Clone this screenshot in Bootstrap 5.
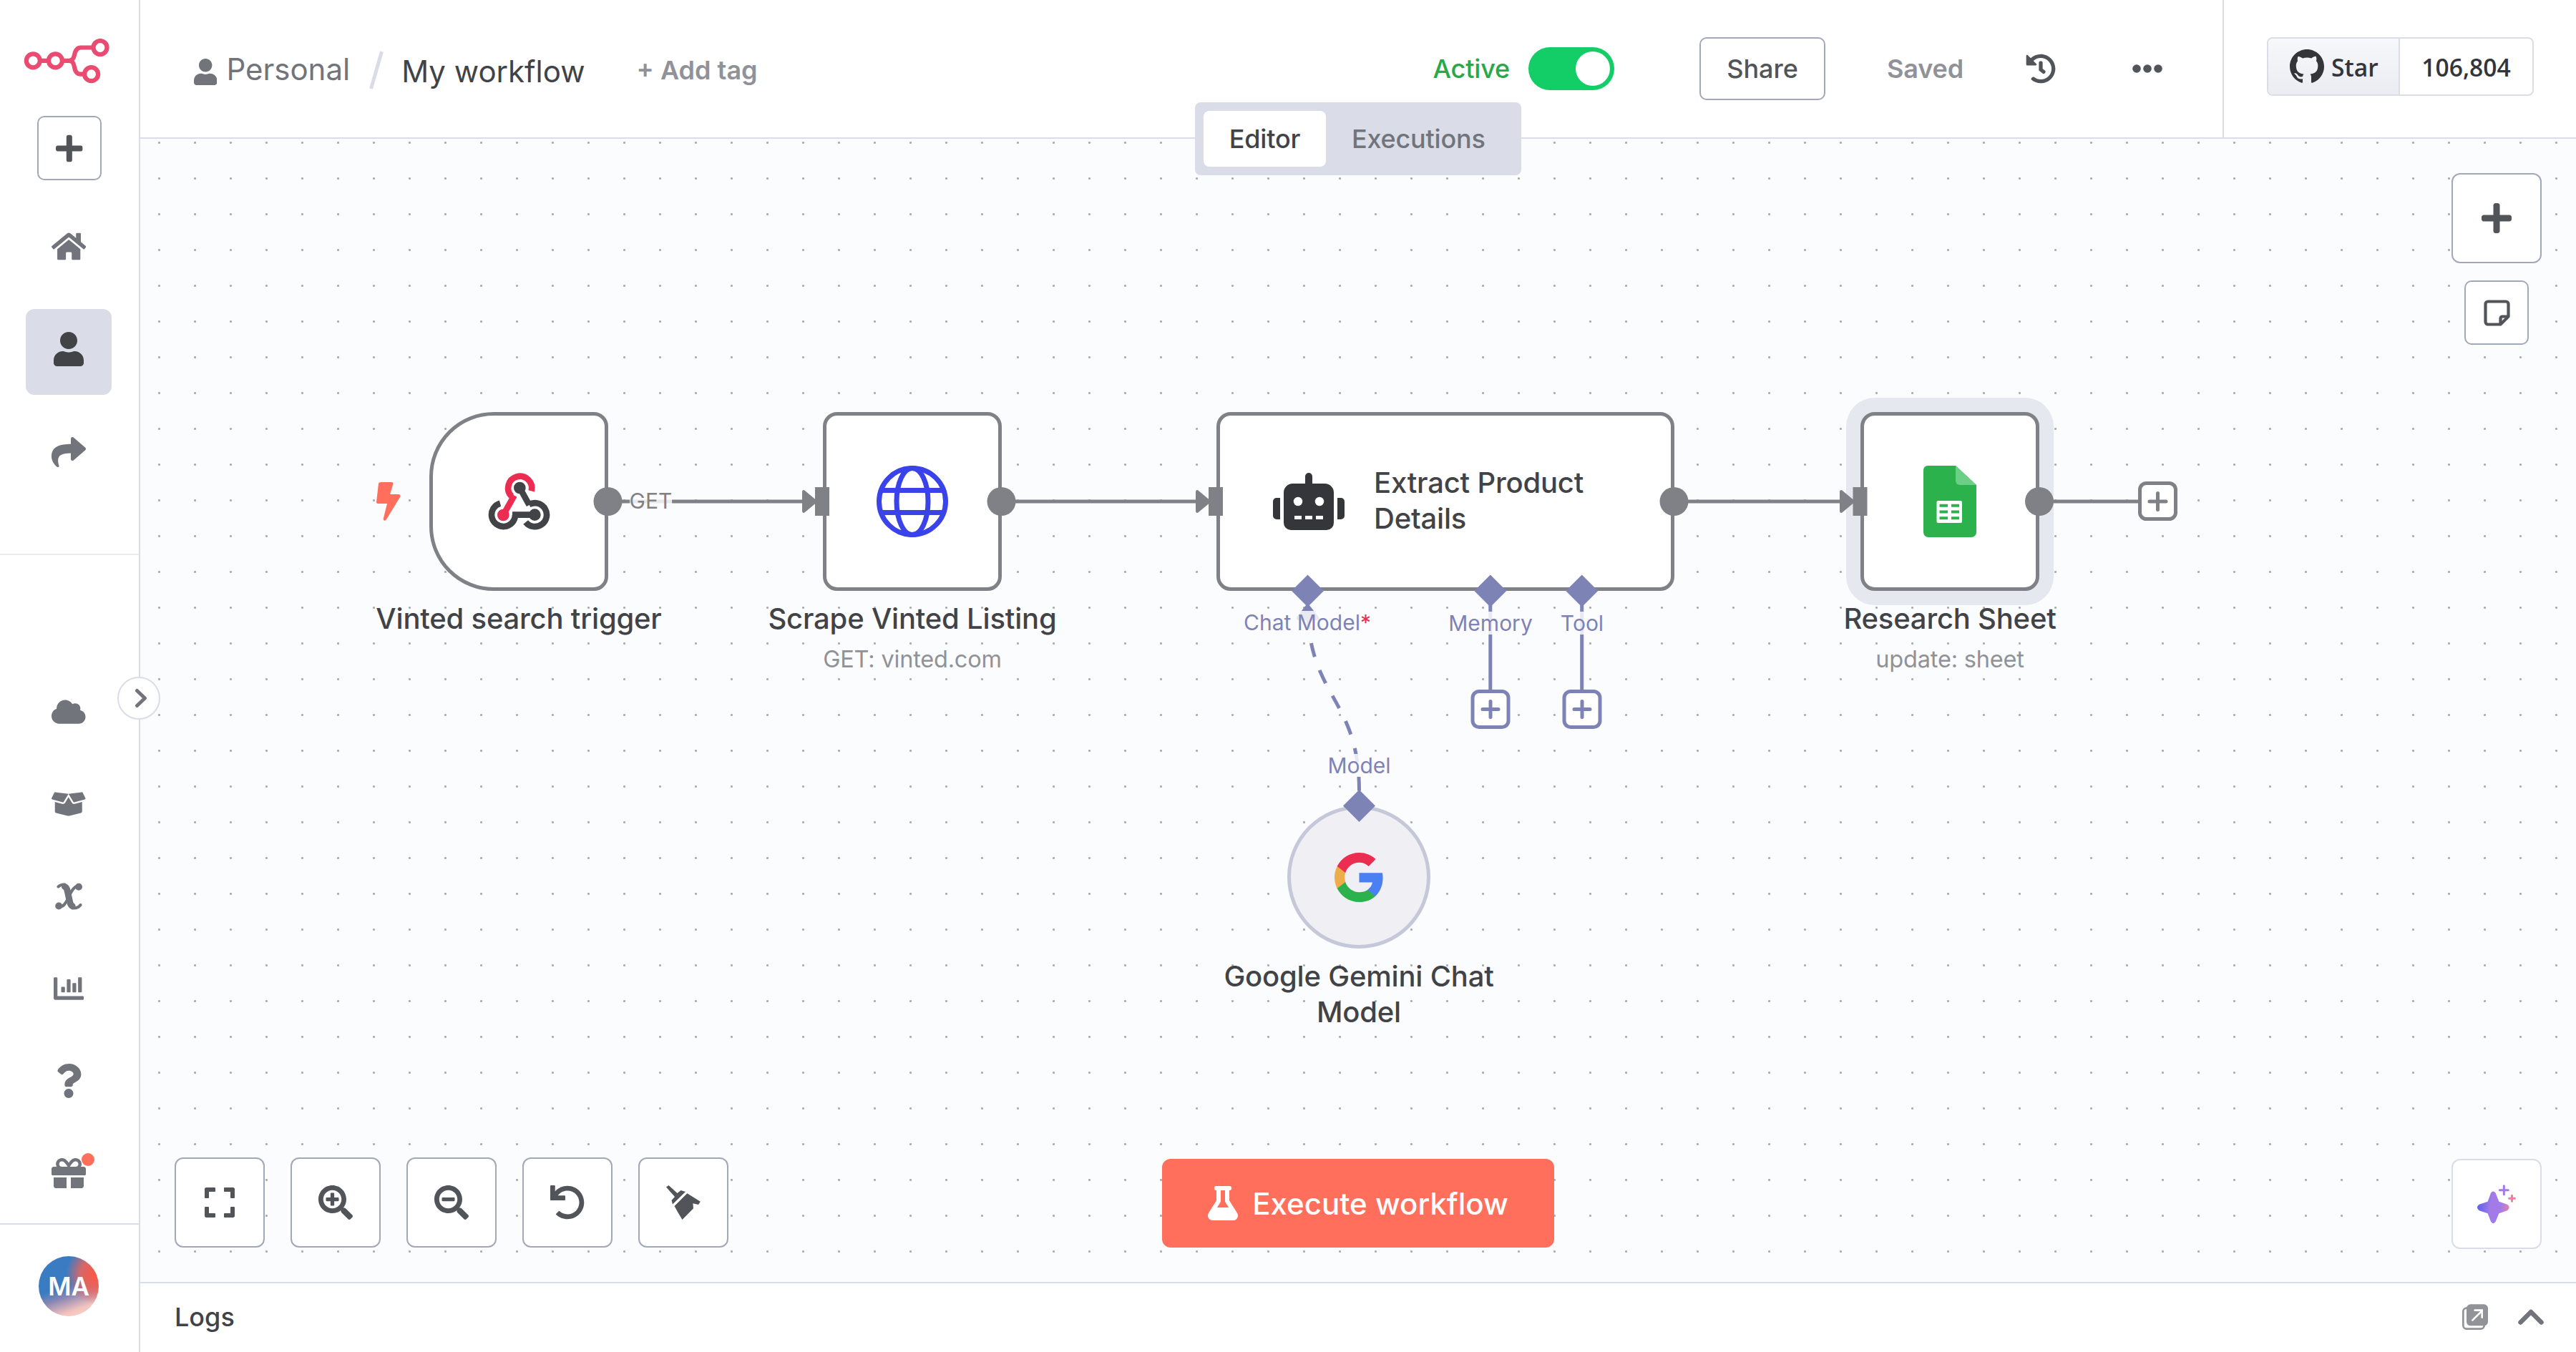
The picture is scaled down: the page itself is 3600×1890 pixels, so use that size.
<!DOCTYPE html>
<html lang="en">
<head>
<meta charset="utf-8">
<title>My workflow</title>
<link href="https://cdn.jsdelivr.net/npm/bootstrap@5.3.0/dist/css/bootstrap.min.css" rel="stylesheet">
<style>
  :root { --edge:#7f8186; --ai:#7e83b6; --line:#dadde8; --ink:#414347; --muted:#909298; --icon:#71747b; --btn-edge:#a3a8b8; --btn-ink:#515458; }
  body { width:3600px; height:1890px; font-family:Inter,"Liberation Sans",sans-serif; font-size:36px; line-height:50px; color:var(--ink); background:#fff; }
  svg { display:block; flex:none; }
  .fa { height:48px; fill:currentColor; }
  .fa-37 { height:37px; }
  .fa-38 { height:38px; }
  .fa-42 { height:42px; }

  /* sidebar */
  .side { width:196px; border-right:2px solid var(--line); color:var(--icon); padding-top:54px; }
  .logo { width:120px; height:63px; margin-left:33px; }
  .add-btn { width:90px; height:90px; margin:45px 0 0 52px; border:2px solid var(--btn-edge); border-radius:10px; color:var(--btn-ink); }
  .add-btn .fa { height:43px; }
  .side-item { width:120px; height:120px; margin-left:36px; border-radius:12px; }
  .side-item.selected { background:var(--line); color:var(--ink); margin-top:28px; margin-bottom:20px; padding-bottom:8px; }
  .side-top { height:492px; margin-top:32px; border-bottom:2px solid #e8eaf0; }
  .side-low { padding-top:154px; height:936px; border-bottom:2px solid var(--line); }
  .low-item { width:192px; height:129px; }
  .wide .fa { height:43px; }
  .dot { width:18px; height:18px; background:#ff6f5c; top:37px; left:114px; }
  .avatar { width:84px; height:84px; margin:44px 0 0 54px; color:#fff; font-size:35px; font-weight:600;
    background:radial-gradient(circle at 95% 30%,#ff5640 0,rgba(240,100,90,.85) 22%,rgba(240,120,110,0) 42%),linear-gradient(160deg,#3a7cc2 0 48%,#8a86b4 62%,#f3c3bd 82%,#ffd9d2); }
  .collapser { width:60px; height:60px; left:164px; top:946px; border:2px solid var(--line); color:var(--icon); z-index:5; }
  .collapser svg { margin-left:5px; }

  /* header */
  .topbar { height:194px; border-bottom:2px solid var(--line); }
  .crumb { padding-left:75px; font-size:42px; }
  .crumb-home { color:var(--icon); gap:13px; }
  .crumb-home .fa { margin-top:8px; }
  .crumb-home span { margin-top:2px; }
  .slash { margin:4px 0 0 27px; }
  .wf-name { margin:7px 0 0 25px; }
  .addtag { font-size:36px; color:var(--muted); font-weight:600; margin:3px 0 0 72px; }
  .actions { margin-right:84px; letter-spacing:-.15px; }
  .is-active { color:#29a84a; font-weight:500; }
  .switch { width:120px; height:60px; border-radius:30px; background:#13ce66; padding:6px; margin-left:26px; }
  .knob { width:48px; height:48px; }
  .share-btn { width:176px; height:88px; border:2px solid var(--btn-edge); border-radius:10px; color:var(--btn-ink); font-size:36px; font-weight:500; margin-left:119px; }
  .saved { color:var(--muted); font-weight:600; margin-left:86px; }
  .history { color:var(--btn-ink); margin-left:87px; }
  .more { margin-left:107px; }
  .github-zone { width:494px; border-left:2px solid var(--line); padding-left:60px; }
  .star { width:373px; height:82px; margin-top:-6px; border:2px solid #dadde5; border-radius:8px; font-family:"Open Sans","Noto Sans",sans-serif; font-weight:600; font-size:33.6px; color:#333539; }
  .star-l { width:184px; border-right:2px solid #dadde5; background:linear-gradient(#f6f8fa,#ebecf2); padding-left:30px; gap:10px; }
  .star-l span, .star-n { padding-top:2px; }
  .tabs { left:50%; top:143px; transform:translateX(-50%); width:456px; height:102px; border-radius:8px; background:var(--line); padding:12px; z-index:4; font-weight:500; letter-spacing:-.2px; }
  .tab-on { width:171px; height:78px; border-radius:8px; color:var(--ink); }
  .tab-off { padding-left:36px; color:var(--icon); }

  /* canvas */
  .canvas { background:#fbfcfe radial-gradient(circle at 1.5px 1.5px,#aaacb0 0 1.2px,rgba(170,172,176,0) 1.9px) 25px 4px/50px 50px; }
  .edges { left:0; top:0; width:3404px; height:1598px; }
  .node { width:250px; height:250px; border:5px solid var(--edge); border-radius:20px; background:#fff; top:382px; }
  .n-trigger { left:404px; border-radius:90px 20px 20px 90px; }
  .n-scrape { left:954px; }
  .n-extract { left:1504px; width:640px; padding-left:74px; gap:41px; font-size:40px; font-weight:500; letter-spacing:-.2px; }
  .n-extract div { margin-top:-2px; }
  .n-sheet { left:2404px; box-shadow:0 0 0 20px #e5e8ef; }
  .n-gemini { left:1603px; top:932px; width:200px; height:200px; border-color:#c4c8d8; background:#efeff4; border-radius:50%; }
  .caption { left:50%; transform:translateX(-50%); top:calc(100% + 19px); width:500px; text-align:center; font-size:40px; line-height:50px; font-weight:500; letter-spacing:-.2px; }
  .subtitle { font-size:32.5px; line-height:40px; margin-top:12px; font-weight:400; color:var(--muted); }
  .n-gemini .caption { width:400px; }
  .port { font-size:30px; line-height:32px; background:rgba(251,252,254,.85); color:var(--ai); transform:translateX(-50%); white-space:nowrap; }
  .p-get { left:713.5px; top:490px; color:var(--edge); }
  .p-chat { left:1631px; top:660px; }
  .p-chat span { color:#ea2d50; }
  .p-memory { left:1887px; top:661px; }
  .p-tool { left:2015px; top:661px; }
  .p-model { left:1703.5px; top:860px; }
  .tool-btn { width:126px; height:126px; border:2px solid var(--btn-edge); border-radius:12px; background:#fff; color:var(--btn-ink); }
  .tool-sm { width:90px; height:90px; border-radius:10px; }
  .tools { left:48px; bottom:48px; gap:36px; }
  .right-tools { right:48px; top:48px; gap:24px; }
  .exec { left:50%; transform:translateX(-50%); bottom:48px; width:548px; height:124px; border-radius:12px; background:#ff6f5c; color:#fff; font-size:42px; font-weight:500; gap:20px; }
  .ai-btn { right:48px; bottom:46px; border-color:var(--line); }
  .logs { height:98px; border-top:2px solid var(--line); padding:0 45px 2px 48px; font-weight:500; }
  .logs-tools { gap:42px; }
</style>
</head>
<body class="d-flex overflow-hidden position-relative">
<svg width="0" height="0" class="position-absolute">
  <symbol id="i-plus" viewBox="0 0 448 512"><path d="M416 208H272V64c0-17.67-14.33-32-32-32h-32c-17.67 0-32 14.33-32 32v144H32c-17.67 0-32 14.33-32 32v32c0 17.67 14.33 32 32 32h144v144c0 17.67 14.33 32 32 32h32c17.67 0 32-14.33 32-32V304h144c17.67 0 32-14.33 32-32v-32c0-17.67-14.33-32-32-32z"/></symbol>
  <symbol id="i-user" viewBox="0 0 448 512"><path d="M224 256c70.7 0 128-57.3 128-128S294.7 0 224 0 96 57.3 96 128s57.3 128 128 128zm89.6 32h-16.7c-22.2 10.2-46.9 16-72.9 16s-50.6-5.8-72.9-16h-16.7C60.2 288 0 348.2 0 422.4V464c0 26.5 21.5 48 48 48h352c26.5 0 48-21.5 48-48v-41.6c0-74.2-60.2-134.4-134.4-134.4z"/></symbol>
</svg>

<aside class="side d-flex flex-column flex-shrink-0">
  <svg class="logo" viewBox="33 54 120 63" fill="none" stroke="#ea4b71" stroke-width="6.2"><circle cx="46.3" cy="84.8" r="9.5"/><circle cx="77.4" cy="84.8" r="9.5"/><circle cx="140" cy="66.5" r="9.5"/><circle cx="127.6" cy="103.7" r="9.5"/><path d="M56 84.8h12M87 84.8h9c5 0 7-3 8-8s3-10.300 9-10.300h18M96 84.800c5 0 7 3 8 9s3 9.900 9 9.900h5"/></svg>
  <button class="add-btn btn p-0 d-flex align-items-center justify-content-center"><svg class="fa" viewBox="0 0 448 512"><use href="#i-plus"/></svg></button>
  <nav class="side-top">
    <div class="side-item wide d-flex align-items-center justify-content-center"><svg class="fa" viewBox="0 0 576 512"><path d="M280.37 148.26L96 300.11V464a16 16 0 0 0 16 16l112.06-.29a16 16 0 0 0 15.92-16V368a16 16 0 0 1 16-16h64a16 16 0 0 1 16 16v95.64a16 16 0 0 0 16 16.05L464 480a16 16 0 0 0 16-16V300L295.67 148.26a12.19 12.19 0 0 0-15.3 0zM571.6 251.47L488 182.56V44.05a12 12 0 0 0-12-12h-56a12 12 0 0 0-12 12v72.61L318.47 43a48 48 0 0 0-61 0L4.34 251.47a12 12 0 0 0-1.6 16.9l25.5 31A12 12 0 0 0 45.15 301l235.22-193.74a12.19 12.19 0 0 1 15.3 0L530.9 301a12 12 0 0 0 16.9-1.6l25.5-31a12 12 0 0 0-1.7-16.93z"/></svg></div>
    <div class="side-item selected d-flex align-items-center justify-content-center"><svg class="fa" viewBox="0 0 448 512"><use href="#i-user"/></svg></div>
    <div class="side-item d-flex align-items-center justify-content-center"><svg class="fa" viewBox="0 0 512 512"><path d="M503.691 189.836L327.687 37.851C312.281 24.546 288 35.347 288 56.015v80.053C127.371 137.907 0 170.1 0 322.326c0 61.441 39.581 122.309 83.333 154.132 13.653 9.931 33.111-2.533 28.077-18.631C66.066 312.814 132.917 274.316 288 272.085V360c0 20.7 24.3 31.453 39.687 18.164l176.004-152c11.071-9.562 11.086-26.753 0-36.328z"/></svg></div>
  </nav>
  <nav class="side-low">
    <div class="low-item d-flex align-items-center justify-content-center"><svg class="fa fa-38" viewBox="0 0 640 512"><path d="M537.6 226.6c4.100-10.700 6.400-22.400 6.400-34.600 0-53-43-96-96-96-19.700 0-38.100 6-53.300 16.200C367 64.200 315.300 32 256 32c-88.400 0-160 71.600-160 160 0 2.700.1 5.400.2 8.100C40.200 219.800 0 273.200 0 336c0 79.500 64.500 144 144 144h368c70.700 0 128-57.300 128-128 0-61.900-44-113.600-102.400-125.400z"/></svg></div>
    <div class="low-item d-flex align-items-center justify-content-center"><svg class="fa fa-38" viewBox="0 0 640 512"><path d="M425.7 256c-16.9 0-32.8-9-41.400-23.400L320 126l-64.200 106.600c-8.700 14.500-24.600 23.500-41.500 23.500-4.500 0-9-.6-13.300-1.900L64 215v178c0 14.700 10 27.500 24.200 31l216.200 54.100c10.200 2.500 20.900 2.500 31 0L551.8 424c14.200-3.600 24.200-16.400 24.200-31V215l-137 39.100c-4.300 1.300-8.800 1.900-13.300 1.900zm212.600-112.2L586.8 41c-3.100-6.200-9.800-9.800-16.700-8.900L320 64l91.700 152.100c3.800 6.300 11.400 9.300 18.500 7.300l197.900-56.500c9.900-2.900 14.700-13.900 10.200-23.100zM53.200 41L1.700 143.800c-4.600 9.200.3 20.200 10.100 23l197.900 56.500c7.100 2 14.700-1 18.500-7.300L320 64 69.800 32.100c-6.900-.8-13.500 2.700-16.600 8.900z"/></svg></div>
    <div class="low-item d-flex align-items-center justify-content-center"><svg width="40" height="40" viewBox="0 0 40 40" fill="none" stroke="currentColor" stroke-linecap="round"><path stroke-width="9" d="M14.500 6.500c2 1 3 3 3.500 5l3.500 16c.7 3 1.500 5 3.500 6"/><path stroke-width="4" d="M5.500 6.500c2.500-2.500 5-3.200 9-3M25 36.500c5 .5 9-1 11.500-4.500M8 34.500c5 0 8-5 12-13.500s7-14.500 13-15.500"/><circle cx="34" cy="6.800" r="3.500" fill="currentColor" stroke-width="3"/><circle cx="6.200" cy="33.500" r="3.500" fill="currentColor" stroke-width="3"/></svg></div>
    <div class="low-item d-flex align-items-center justify-content-center"><svg class="fa fa-42" viewBox="0 0 512 512"><path d="M332.8 320h38.400c6.400 0 12.800-6.400 12.800-12.800V172.800c0-6.400-6.400-12.800-12.800-12.800h-38.400c-6.400 0-12.800 6.400-12.800 12.800v134.400c0 6.400 6.400 12.800 12.800 12.800zm96 0h38.400c6.400 0 12.800-6.400 12.800-12.800V76.800c0-6.400-6.400-12.800-12.800-12.800h-38.400c-6.400 0-12.800 6.400-12.800 12.800v230.400c0 6.400 6.400 12.800 12.800 12.800zm-288 0h38.400c6.400 0 12.800-6.400 12.800-12.800v-70.400c0-6.400-6.400-12.800-12.800-12.800h-38.400c-6.400 0-12.800 6.400-12.800 12.800v70.400c0 6.400 6.400 12.800 12.800 12.800zm96 0h38.400c6.400 0 12.800-6.400 12.800-12.800V108.800c0-6.400-6.400-12.800-12.800-12.800h-38.400c-6.400 0-12.800 6.400-12.800 12.800v198.400c0 6.400 6.400 12.800 12.800 12.800zM496 384H64V80c0-8.840-7.160-16-16-16H16C7.160 64 0 71.160 0 80v336c0 17.670 14.330 32 32 32h464c8.840 0 16-7.160 16-16v-32c0-8.840-7.160-16-16-16z"/></svg></div>
    <div class="low-item d-flex align-items-center justify-content-center"><svg class="fa" viewBox="0 0 384 512"><path d="M202.021 0C122.202 0 70.503 32.703 29.914 91.026c-7.363 10.580-5.093 25.086 5.178 32.874l43.138 32.709c10.373 7.865 25.132 6.026 33.253-4.148 25.049-31.381 43.630-49.449 82.757-49.449 30.764 0 68.816 19.799 68.816 49.631 0 22.552-18.617 34.134-48.993 51.164-35.423 19.860-82.299 44.576-82.299 106.405V320c0 13.255 10.745 24 24 24h72.471c13.255 0 24-10.745 24-24v-5.773c0-42.860 125.268-44.645 125.268-160.627C377.504 66.256 286.902 0 202.021 0zM192 373.459c-38.196 0-69.271 31.075-69.271 69.271 0 38.195 31.075 69.270 69.271 69.270s69.271-31.075 69.271-69.271-31.075-69.270-69.271-69.270z"/></svg></div>
    <div class="low-item d-flex align-items-center justify-content-center position-relative"><svg class="fa" viewBox="0 0 512 512"><path d="M32 448c0 17.700 14.300 32 32 32h160V320H32v128zm256 32h160c17.700 0 32-14.300 32-32V320H288v160zm192-320h-42.100c6.200-12.100 10.100-25.500 10.100-40 0-48.500-39.500-88-88-88-41.600 0-68.500 21.300-103 68.300-34.500-47-61.400-68.300-103-68.300-48.500 0-88 39.500-88 88 0 14.500 3.800 27.900 10.100 40H32c-17.700 0-32 14.300-32 32v80c0 8.800 7.200 16 16 16h480c8.800 0 16-7.200 16-16v-80c0-17.700-14.300-32-32-32zm-326.100 0c-22.100 0-40-17.900-40-40s17.900-40 40-40c19.900 0 34.600 3.300 86.100 80h-86.100zm206.100 0h-86.100c51.400-76.500 65.700-80 86.100-80 22.100 0 40 17.900 40 40s-17.900 40-40 40z"/></svg><span class="dot rounded-circle position-absolute"></span></div>
  </nav>
  <div class="avatar rounded-circle d-flex align-items-center justify-content-center">MA</div>
</aside>
<button class="collapser btn p-0 bg-white rounded-circle position-absolute d-flex align-items-center justify-content-center"><svg width="18" height="28" viewBox="0 0 18 28" fill="none" stroke="currentColor" stroke-width="5" stroke-linecap="round" stroke-linejoin="round"><path d="M3.500 3.500l11 10.500-11 10.500"/></svg></button>

<div class="d-flex flex-column flex-grow-1 position-relative">
  <header class="topbar d-flex flex-shrink-0">
    <div class="crumb d-flex align-items-center flex-grow-1">
      <div class="crumb-home d-flex align-items-center"><svg class="fa fa-37" viewBox="0 0 448 512"><use href="#i-user"/></svg><span>Personal</span></div>
      <svg class="slash" width="20" height="54" viewBox="0 0 20 54"><path d="M17.500 1L2.500 53" stroke="#dadde8" stroke-width="5"/></svg>
      <span class="wf-name">My workflow</span>
      <span class="addtag">+ Add tag</span>
    </div>
    <div class="actions d-flex align-items-center">
      <span class="is-active">Active</span>
      <div class="switch d-flex justify-content-end"><span class="knob bg-white rounded-circle"></span></div>
      <button class="share-btn btn p-0">Share</button>
      <span class="saved">Saved</span>
      <svg class="fa fa-42 history" viewBox="0 0 512 512"><path d="M504 255.531c.253 136.640-111.180 248.372-247.820 248.468-59.015.042-113.223-20.530-155.822-54.911-11.077-8.940-11.905-25.541-1.839-35.607l11.267-11.267c8.609-8.609 22.353-9.551 31.891-1.984C173.062 425.135 212.781 440 256 440c101.705 0 184-82.311 184-184 0-101.705-82.311-184-184-184-48.814 0-93.149 18.969-126.068 49.932l50.754 50.754c10.080 10.080 2.941 27.314-11.313 27.314H24c-8.837 0-16-7.163-16-16V38.627c0-14.254 17.234-21.393 27.314-11.314l49.372 49.372C129.209 34.136 189.552 8 256 8c136.810 0 247.747 110.780 248 247.531zm-180.912 78.784l9.823-12.630c8.138-10.463 6.253-25.542-4.210-33.679L288 256.349V152c0-13.255-10.745-24-24-24h-16c-13.255 0-24 10.745-24 24v135.651l65.409 50.874c10.463 8.137 25.541 6.253 33.679-4.210z"/></svg>
      <svg class="more" width="42" height="12" viewBox="0 0 42 12" fill="#515458"><circle cx="6" cy="6" r="5.800"/><circle cx="21" cy="6" r="5.800"/><circle cx="36" cy="6" r="5.800"/></svg>
    </div>
    <div class="github-zone d-flex align-items-center">
      <div class="star d-flex overflow-hidden">
        <div class="star-l d-flex align-items-center"><svg width="48" height="48" viewBox="0 0 16 16" fill="#333539"><path d="M8 0C3.580 0 0 3.580 0 8c0 3.540 2.290 6.530 5.470 7.590.4.07.55-.17.55-.38 0-.19-.01-.82-.01-1.490-2.010.37-2.530-.49-2.690-.94-.09-.23-.48-.94-.82-1.130-.28-.15-.68-.52-.01-.53.63-.01 1.080.58 1.230.82.72 1.210 1.870.87 2.330.66.07-.52.28-.87.51-1.070-1.780-.2-3.640-.89-3.640-3.950 0-.87.31-1.590.82-2.150-.08-.2-.36-1.020.08-2.120 0 0 .67-.21 2.200.82.64-.18 1.320-.27 2-.27.68 0 1.360.09 2 .27 1.530-1.040 2.200-.82 2.200-.82.44 1.100.16 1.920.08 2.120.51.56.82 1.270.82 2.150 0 3.070-1.870 3.750-3.650 3.950.29.25.54.73.54 1.480 0 1.070-.01 1.930-.01 2.200 0 .21.15.46.55.38A8.013 8.013 0 0016 8c0-4.420-3.580-8-8-8z"/></svg><span>Star</span></div>
        <div class="star-n flex-grow-1 d-flex align-items-center justify-content-center">106,804</div>
      </div>
    </div>
  </header>
  <div class="tabs position-absolute d-flex align-items-center"><span class="tab-on bg-white d-flex align-items-center justify-content-center">Editor</span><span class="tab-off">Executions</span></div>

  <main class="canvas flex-grow-1 position-relative overflow-hidden">
    <div class="node n-trigger position-absolute d-flex align-items-center justify-content-center">
      <svg width="100" height="100" viewBox="495 33 300 300" fill="none" stroke="#414347" stroke-width="26"><path d="M630 239A49.500 49.500 0 1 1 567 191M618 239h94M649 126l40 72M688 196A49.500 49.500 0 1 1 674 270"/><g fill="#414347" stroke="none"><circle cx="649" cy="126" r="25"/><circle cx="712" cy="239" r="25"/></g><path stroke="#ea2d50" d="M698 139A49.500 49.500 0 1 0 615 162M626 158L580 240"/><circle cx="580" cy="240" r="25" fill="#ea2d50" stroke="none"/></svg>
      <div class="caption position-absolute">Vinted search trigger</div>
    </div>
    <div class="node n-scrape position-absolute d-flex align-items-center justify-content-center">
      <svg width="100" height="100" viewBox="0 0 100 100" fill="none" stroke="#3a42e9" stroke-width="7"><circle cx="50" cy="50" r="46.500"/><ellipse cx="50" cy="50" rx="22" ry="46.500"/><path d="M7 34.500h86M7 65.500h86"/></svg>
      <div class="caption position-absolute">Scrape Vinted Listing<div class="subtitle">GET: vinted.com</div></div>
    </div>
    <div class="node n-extract position-absolute d-flex align-items-center">
      <svg width="100" height="80" viewBox="0 0 640 512" fill="#353639"><path d="M32,224H64V416H32A31.966,31.966,0,0,1,0,384V256A31.966,31.966,0,0,1,32,224Zm512-48V448a64.063,64.063,0,0,1-64,64H160a64.063,64.063,0,0,1-64-64V176a79.974,79.974,0,0,1,80-80H288V32a32,32,0,0,1,64,0V96H464A79.974,79.974,0,0,1,544,176ZM264,256a40,40,0,1,0-40,40A39.997,39.997,0,0,0,264,256Zm-8,128H192v32h64Zm96,0H288v32h64ZM456,256a40,40,0,1,0-40,40A39.997,39.997,0,0,0,456,256Zm-8,128H384v32h64ZM640,256V384a31.966,31.966,0,0,1-32,32H576V224h32A31.966,31.966,0,0,1,640,256Z"/></svg>
      <div>Extract Product<br>Details</div>
    </div>
    <div class="node n-sheet position-absolute d-flex align-items-center justify-content-center">
      <svg width="74" height="100" viewBox="0 0 74 100"><path d="M6 0H45L74 27V93a7 7 0 0 1-7 7H7a7 7 0 0 1-7-7V6a6 6 0 0 1 6-6z" fill="#2bb24c"/><path d="M45 0L74 27H51a6 6 0 0 1-6-6z" fill="#6bd085"/><rect x="18.500" y="49" width="35.500" height="31" rx="2" fill="#fff"/><path d="M22.500 55.800h11.500M39 55.800h11M22.500 64.500h11.500M39 64.500h11M22.500 73.200h11.500M39 73.200h11" stroke="#2bb24c" stroke-width="4"/></svg>
      <div class="caption position-absolute">Research Sheet<div class="subtitle">update: sheet</div></div>
    </div>
    <div class="node n-gemini position-absolute d-flex align-items-center justify-content-center">
      <svg width="68" height="69" viewBox="1 1 21.700 22" preserveAspectRatio="none"><path fill="#4a80f2" d="M22.560 12.250c0-.78-.07-1.530-.2-2.250H12v4.260h5.920c-.26 1.370-1.040 2.530-2.210 3.310v2.770h3.570c2.080-1.920 3.280-4.740 3.280-8.090z"/><path fill="#2bb24c" d="M12 23c2.970 0 5.460-.98 7.280-2.660l-3.570-2.770c-.98.66-2.230 1.060-3.710 1.060-2.860 0-5.290-1.930-6.160-4.530H2.180v2.840C3.990 20.530 7.700 23 12 23z"/><path fill="#eead4b" d="M5.840 14.090c-.22-.66-.35-1.360-.35-2.090s.13-1.430.35-2.090V7.070H2.180C1.430 8.550 1 10.220 1 12s.43 3.450 1.180 4.930l2.850-2.220.81-.62z"/><path fill="#ea2d50" d="M12 5.380c1.620 0 3.060.56 4.210 1.640l3.150-3.150C17.450 2.090 14.970 1 12 1 7.700 1 3.990 3.470 2.180 7.070l3.660 2.840c.87-2.600 3.300-4.530 6.160-4.530z"/></svg>
      <div class="caption position-absolute">Google Gemini Chat Model</div>
    </div>

    <svg class="edges position-absolute" viewBox="196 194 3404 1598" fill="none">
      <path d="M533 674h14a2.500 2.500 0 0 1 2.300 3L545 691h12a2.500 2.500 0 0 1 2 4l-19 31c-2 3-5 2-4-2l5-20h-13a2 2 0 0 1-2-2l3-26q.5-2 4-2z" fill="#ff6f5c"/>
      <g stroke="#7f8186" stroke-width="5"><path d="M850 701h275M1400 701h275M2340 701h235M2850 701h138"/></g>
      <g fill="#7f8186">
        <circle cx="849.500" cy="701" r="20"/><circle cx="1399.500" cy="701" r="20"/><circle cx="2339.500" cy="701" r="20"/><circle cx="2850" cy="701" r="20"/>
        <path d="M1139 681h20v40h-20zM1689 681h20v40h-20zM2589.500 681h20v40h-20z"/>
        <path id="head" d="M1121 688c0-3 2-4 4-2l18 15-18 15c-2 2-4 1-4-2z"/><use href="#head" x="550"/><use href="#head" x="1450"/>
      </g>
      <g stroke="#7e83b6" stroke-width="5">
        <path d="M1899.500 1105.500C1899.500 975 1827.500 975 1827.500 846" stroke-dasharray="20 20"/>
        <path d="M2082.800 826v138M2210.700 826v138"/>
        <g fill="#fff"><rect x="2058" y="966.500" width="50" height="50" rx="9"/><rect x="2186" y="966.500" width="50" height="50" rx="9"/></g>
        <path d="M2072 991.500h22M2083 980.500v22M2200 991.500h22M2211 980.500v22" stroke-linecap="round"/>
      </g>
      <g fill="#7e83b6"><path d="M1827.500 803.500l22.500 22.500-22.500 22.500-22.500-22.500zM2082.800 803.500l22.500 22.500-22.500 22.500-22.500-22.500zM2210.700 803.500l22.500 22.500-22.500 22.500-22.500-22.500zM1899.500 1104l22.500 22.500-22.500 22.500-22.500-22.500zM1827.500 843l15 19c2 3 0 5-3 5h-24c-3 0-5-2-3-5z"/></g>
      <rect x="2990.500" y="675.500" width="50" height="50" rx="9" fill="#fff" stroke="#7f8186" stroke-width="5"/><path d="M3004 701h23M3015.500 689.500v23" stroke="#7f8186" stroke-width="5" stroke-linecap="round"/>
    </svg>
    <span class="port p-get position-absolute">GET</span>
    <span class="port p-chat position-absolute">Chat Model<span>*</span></span>
    <span class="port p-memory position-absolute">Memory</span>
    <span class="port p-tool position-absolute">Tool</span>
    <span class="port p-model position-absolute">Model</span>

    <div class="right-tools position-absolute d-flex flex-column align-items-center">
      <button class="tool-btn btn p-0 d-flex align-items-center justify-content-center"><svg class="fa" viewBox="0 0 448 512"><use href="#i-plus"/></svg></button>
      <button class="tool-btn tool-sm btn p-0 d-flex align-items-center justify-content-center"><svg width="37" height="37" viewBox="0 0 37 37" fill="none" stroke="currentColor" stroke-width="4.200" stroke-linejoin="round"><path d="M6 2.500h25a3.500 3.500 0 0 1 3.500 3.500v17.500l-11 11H6A3.500 3.500 0 0 1 2.500 31V6A3.500 3.500 0 0 1 6 2.500z"/><path d="M34 23.500h-8a2.500 2.500 0 0 0-2.500 2.500v8"/></svg></button>
    </div>
    <div class="tools position-absolute d-flex">
      <button class="tool-btn btn p-0 d-flex align-items-center justify-content-center"><svg class="fa" viewBox="0 0 448 512"><path d="M0 180V56c0-13.300 10.700-24 24-24h124c6.600 0 12 5.400 12 12v40c0 6.600-5.400 12-12 12H64v84c0 6.600-5.400 12-12 12H12c-6.600 0-12-5.400-12-12zM288 44v40c0 6.600 5.400 12 12 12h84v84c0 6.600 5.400 12 12 12h40c6.600 0 12-5.400 12-12V56c0-13.300-10.700-24-24-24H300c-6.600 0-12 5.400-12 12zm148 276h-40c-6.600 0-12 5.400-12 12v84h-84c-6.600 0-12 5.400-12 12v40c0 6.600 5.400 12 12 12h124c13.300 0 24-10.700 24-24V332c0-6.600-5.400-12-12-12zM160 468v-40c0-6.600-5.400-12-12-12H64v-84c0-6.600-5.400-12-12-12H12c-6.600 0-12 5.400-12 12v124c0 13.300 10.700 24 24 24h124c6.600 0 12-5.400 12-12z"/></svg></button>
      <button class="tool-btn btn p-0 d-flex align-items-center justify-content-center"><svg class="fa" viewBox="0 0 512 512"><path d="M304 192v32c0 6.600-5.400 12-12 12h-56v56c0 6.600-5.400 12-12 12h-32c-6.600 0-12-5.400-12-12v-56h-56c-6.600 0-12-5.400-12-12v-32c0-6.600 5.400-12 12-12h56v-56c0-6.600 5.400-12 12-12h32c6.600 0 12 5.400 12 12v56h56c6.600 0 12 5.400 12 12zm201 284.700L476.700 505c-9.400 9.400-24.600 9.400-33.900 0L343 405.300c-4.500-4.500-7-10.600-7-17V372c-35.300 27.600-79.700 44-128 44C93.100 416 0 322.900 0 208S93.100 0 208 0s208 93.100 208 208c0 48.300-16.400 92.700-44 128h16.300c6.400 0 12.500 2.500 17 7l99.700 99.700c9.300 9.400 9.300 24.600 0 34zM344 208c0-75.200-60.800-136-136-136S72 132.800 72 208s60.800 136 136 136 136-60.800 136-136z"/></svg></button>
      <button class="tool-btn btn p-0 d-flex align-items-center justify-content-center"><svg class="fa" viewBox="0 0 512 512"><path d="M304 192v32c0 6.600-5.400 12-12 12H124c-6.600 0-12-5.400-12-12v-32c0-6.600 5.400-12 12-12h168c6.600 0 12 5.400 12 12zm201 284.700L476.700 505c-9.400 9.400-24.600 9.400-33.900 0L343 405.300c-4.500-4.500-7-10.600-7-17V372c-35.300 27.600-79.700 44-128 44C93.100 416 0 322.900 0 208S93.100 0 208 0s208 93.100 208 208c0 48.300-16.400 92.700-44 128h16.300c6.400 0 12.500 2.500 17 7l99.700 99.700c9.300 9.400 9.300 24.600 0 34zM344 208c0-75.200-60.800-136-136-136S72 132.800 72 208s60.800 136 136 136 136-60.800 136-136z"/></svg></button>
      <button class="tool-btn btn p-0 d-flex align-items-center justify-content-center"><svg class="fa" viewBox="0 0 512 512"><path d="M212.333 224.333H12c-6.627 0-12-5.373-12-12V12C0 5.373 5.373 0 12 0h48c6.627 0 12 5.373 12 12v78.112C117.773 39.279 184.260 7.470 258.175 8.007c136.906.994 246.448 111.623 246.157 248.532C504.041 393.258 393.120 504 256.333 504c-64.089 0-122.496-24.313-166.510-64.215-5.099-4.622-5.334-12.554-.467-17.420l33.967-33.967c4.474-4.474 11.662-4.717 16.401-.525C170.760 415.336 211.580 432 256.333 432c97.268 0 176-78.716 176-176 0-97.267-78.716-176-176-176-58.496 0-110.280 28.476-142.274 72.333h98.274c6.627 0 12 5.373 12 12v48c0 6.627-5.373 12-12 12z"/></svg></button>
      <button class="tool-btn btn p-0 d-flex align-items-center justify-content-center"><svg class="fa" viewBox="0 0 48 48"><path d="M0 2.500L3.500 0l12 11 5-4 6.500 2L9 26.500 7.500 21l4.500-5zM29.400 11.300l18.400 11.400L45 27l-7.600-1.700.6 7L22.500 48l-6-10-5-9z"/></svg></button>
    </div>
    <button class="exec btn p-0 position-absolute d-flex align-items-center justify-content-center"><svg class="fa" viewBox="0 0 448 512"><path d="M437.200 403.500L320 215V64h8c13.300 0 24-10.700 24-24V24c0-13.300-10.700-24-24-24H120c-13.300 0-24 10.700-24 24v16c0 13.300 10.700 24 24 24h8v151L10.800 403.500C-18.500 450.600 15.300 512 70.900 512h306.200c55.700 0 89.400-61.500 60.100-108.500zM137.900 320l48.200-77.600c3.700-5.200 5.800-11.600 5.800-18.400V64h64v160c0 6.900 2.200 13.200 5.800 18.400l48.200 77.600h-172z"/></svg>Execute workflow</button>
    <button class="tool-btn ai-btn btn p-0 position-absolute d-flex align-items-center justify-content-center"><svg width="54" height="55" viewBox="246 197 162 164"><defs><linearGradient id="spark" gradientUnits="userSpaceOnUse" x1="246" y1="280" x2="408" y2="300"><stop offset="0" stop-color="#5b60e8"/><stop offset=".35" stop-color="#a37be8"/><stop offset=".6" stop-color="#a37be8"/><stop offset=".9" stop-color="#f6809c"/></linearGradient></defs><path fill="url(#spark)" d="M303 232Q313 218 323 232L337 268 372 280Q388 292 372 305L337 317 323 352Q313 366 303 352L290 317 254 305Q238 292 254 280L290 268z"/><path d="M358 202v36M340 220h36" stroke="#a37be8" stroke-width="9" stroke-linecap="round"/><path d="M391.500 242v24M379.500 254h24" stroke="#ee809f" stroke-width="9" stroke-linecap="round"/></svg></button>
  </main>
  <footer class="logs d-flex align-items-center flex-shrink-0">
    <span class="flex-grow-1">Logs</span>
    <div class="logs-tools d-flex align-items-center">
      <svg width="36" height="36" viewBox="183 698 108 108"><rect x="187" y="715" width="88" height="87" rx="14" fill="none" stroke="#929399" stroke-width="8"/><rect x="201" y="699" width="90" height="90" rx="17" fill="#929399"/><path d="M226 766l40-40M236 724h30v30" fill="none" stroke="#fff" stroke-width="8" stroke-linecap="round"/></svg>
      <svg width="36" height="22" viewBox="0 0 36 22" fill="none" stroke="#71747b" stroke-width="6.500" stroke-linecap="round" stroke-linejoin="round"><path d="M3.500 18.500L18 4l14.500 14.500"/></svg>
    </div>
  </footer>
</div>
<script src="https://cdn.jsdelivr.net/npm/bootstrap@5.3.0/dist/js/bootstrap.bundle.min.js"></script>
</body>
</html>
